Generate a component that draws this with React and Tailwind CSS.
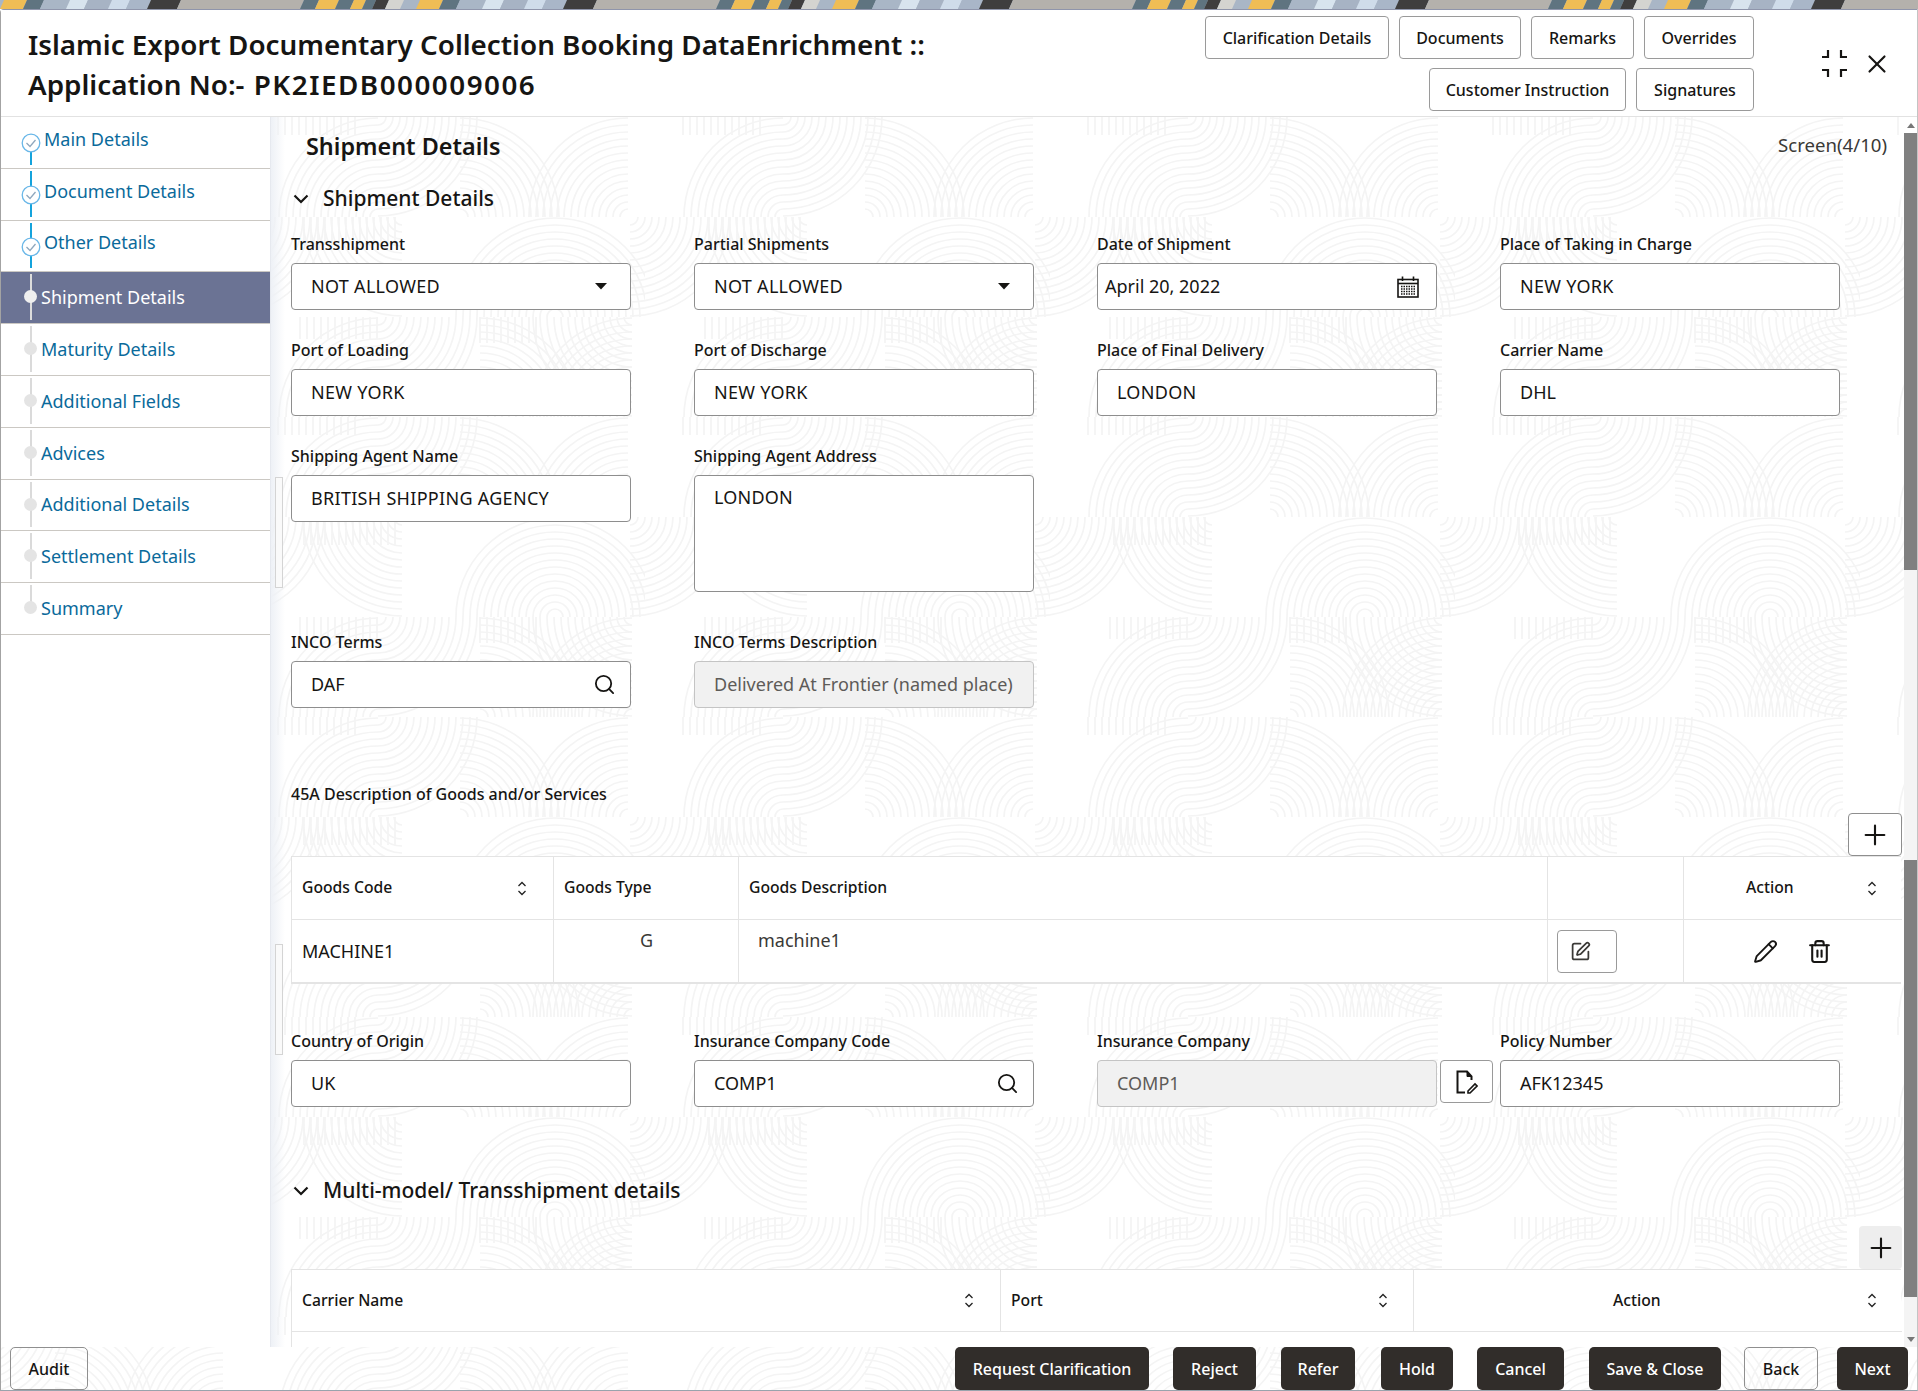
import React from "react";
import { Search, Plus, SquarePen, Pencil, Trash2, X } from "lucide-react";

const QUADS = [
  [138, 100, -1, -1], [138, 0, 1, 1], [220, 100, 1, -1], [388, 100, -1, -1],
  [315, 200, -1, -1], [315, 200, 1, -1], [162, 100, -1, 1], [390, 100, 1, 1], [-15, 100, 1, 1],
  [138, 200, 1, 1], [138, 300, -1, -1], [240, 300, 1, -1], [392, 300, -1, -1], [-13, 300, -1, -1], [392, 200, -1, 1], [-13, 200, -1, 1],
];
const RADII = [8, 15, 22, 29, 36, 43, 50, 57, 64, 71, 78, 85, 92, 99];
const HATCH = [
  [64, 100, 162, 28], [60, 200, 138, 22], [240, 200, 300, 26], [38, 0, 120, 18],
];

function PatternBg() {
  return (
    <svg className="absolute inset-0 w-full h-full" aria-hidden="true">
      <defs>
        <pattern id="fp" width="405" height="300" patternUnits="userSpaceOnUse" patternTransform="translate(240 117)">
          {QUADS.map(([cx, cy, sx, sy], i) =>
            RADII.map((r) => (
              <path
                key={i + "-" + r}
                d={`M${cx + sx * r} ${cy}A${r} ${r} 0 0 ${sx * sy > 0 ? 1 : 0} ${cx} ${cy + sy * r}`}
                fill="none"
                stroke="#f4f4f4"
                strokeWidth="1.7"
              />
            ))
          )}
          {HATCH.map(([a, y, b, h], i) => {
            const xs = [];
            for (let x = a; x < b; x += 7) xs.push(x);
            return xs.map((x) => (
              <path key={"h" + i + "-" + x} d={`M${x} ${y}V${y + h}`} stroke="#f4f4f4" strokeWidth="1.7" />
            ));
          })}
        </pattern>
      </defs>
      <rect width="100%" height="100%" fill="#fff" />
      <rect width="100%" height="100%" fill="url(#fp)" />
    </svg>
  );
}

const BANNER = [
  [0, 23, "#efbd55"], [23, 40, "#5f7480"], [40, 66, "#a9b6c6"], [66, 84, "#d8e4ee"], [84, 108, "#a7b3c4"],
  [108, 126, "#cfdcea"], [126, 147, "#a9b6c8"], [147, 177, "#3f3e3e"], [177, 300, "#b4b1ac"],
  [300, 315, "#5f7480"], [315, 335, "#efbd55"], [335, 350, "#5f7480"], [350, 362, "#efbd55"],
  [362, 372, "#5f7480"], [372, 385, "#3f3e3e"], [385, 400, "#d4d4d0"],
];

function Banner() {
  return (
    <svg className="block w-full h-[9px] shrink-0" aria-hidden="true">
      <defs>
        <pattern id="bn" width="416" height="9" patternUnits="userSpaceOnUse">
          <rect width="416" height="9" fill="#a9b6c6" />
          {BANNER.map(([a, b, c], i) => (
            <polygon key={i} points={`${a + 4},0 ${b + 4},0 ${b},9 ${a},9`} fill={c} />
          ))}
        </pattern>
      </defs>
      <rect width="100%" height="9" fill="url(#bn)" />
    </svg>
  );
}

function Sort({ className = "" }) {
  return (
    <svg width="10" height="15" viewBox="0 0 10 15" fill="none" stroke="#222" strokeWidth="1.3" className={className}>
      <path d="M1.5 5L5 1.5L8.5 5" />
      <path d="M1.5 10L5 13.5L8.5 10" />
    </svg>
  );
}

function Caret() {
  return <svg width="12" height="7" viewBox="0 0 12 7"><path d="M0 0H12L6 6.5Z" fill="#161513" /></svg>;
}

function Chevron() {
  return (
    <svg width="16" height="10" viewBox="0 0 16 10" fill="none" stroke="#161513" strokeWidth="2.2">
      <path d="M1.5 1.5L8 8L14.5 1.5" />
    </svg>
  );
}

function CalendarIcon() {
  return (
    <svg width="22" height="22" viewBox="0 0 22 22" fill="none" stroke="#161513">
      <rect x="1" y="3.5" width="20" height="17.5" strokeWidth="1.6" />
      <path d="M5.5 0.5V5M16.5 0.5V5" strokeWidth="1.6" />
      <path d="M1 7.5H21" strokeWidth="1.6" />
      <path d="M4 10.5H18M4 13H18M4 15.5H18M4 18H18" strokeWidth="1.3" strokeDasharray="1.5 1" />
    </svg>
  );
}

function FileEdit() {
  return (
    <svg width="22" height="24" viewBox="0 0 22 24" fill="none" stroke="#161513" strokeWidth="2">
      <path d="M9 22.5H1.5V1.5H11L15.5 6.5V10" />
      <path d="M11 1.5V6.5H15.5Z" fill="#161513" strokeWidth="1" />
      <path d="M12 21L19 14L21 16L14 23H12Z" strokeWidth="1.6" />
    </svg>
  );
}

function Compress() {
  return (
    <svg width="27" height="27" viewBox="0 0 27 27" fill="none" stroke="#161513" strokeWidth="2.2">
      <path d="M7 0V7H1M20 0V7H26M7 27V20H1M20 27V20H26" />
    </svg>
  );
}

function CheckDot() {
  return (
    <svg width="20" height="20" viewBox="0 0 20 20" fill="#fff" stroke="#69b7e8" strokeWidth="1.3">
      <circle cx="10" cy="10" r="8.8" />
      <path d="M5.5 10L9 13.5L14.5 7" fill="none" stroke="#8fa7bd" />
    </svg>
  );
}

const NAV = [
  { t: "Main Details", done: true, first: true },
  { t: "Document Details", done: true },
  { t: "Other Details", done: true },
  { t: "Shipment Details", active: true },
  { t: "Maturity Details" },
  { t: "Additional Fields" },
  { t: "Advices" },
  { t: "Additional Details" },
  { t: "Settlement Details" },
  { t: "Summary", last: true },
];

function NavItem({ t, done, active, first, last }) {
  return (
    <div
      className={`relative h-[51.8px] flex items-center border-b border-[#cbc8c3] text-[18px] shrink-0 ${
        active ? "bg-[#6b7394] text-white" : "text-[#0a6a9b]"
      } ${done ? "pl-[43px] pb-[6px]" : "pl-[40px]"}`}
    >
      <span
        className={`absolute left-[28.5px] w-[2px] ${first ? "top-[26px]" : "top-[2px]"} ${last ? "bottom-[24px]" : "bottom-[3px]"} ${
          done ? "bg-[#14a3dc]" : active ? "bg-[#dcdcdc]" : "bg-[#dadada]"
        }`}
      />
      {done ? (
        <span className="absolute left-[19.5px] top-[16px]"><CheckDot /></span>
      ) : (
        <span className={`absolute left-[23px] top-[18px] w-[13px] h-[13px] rounded-full ${active ? "bg-[#efefef]" : "bg-[#e4e4e4]"}`} />
      )}
      <span>{t}</span>
    </div>
  );
}

function TopBtn({ w, children }) {
  return (
    <button className={`h-[43px] ${w} shrink-0 rounded-[4px] border border-[#9a9a9a] bg-white text-[16px] font-medium text-[#161513]`}>
      {children}
    </button>
  );
}

function FootBtn({ w, dark, children }) {
  return (
    <button
      className={`h-[43px] ${w} shrink-0 rounded-[5px] text-[16px] font-medium ${
        dark ? "bg-[#312d2a] text-white" : "border border-[#8f8f8f] text-[#161513]"
      }`}
    >
      {children}
    </button>
  );
}

function Field({ label, children, className = "" }) {
  return (
    <div className={className}>
      <div className="h-[22px] mb-[8px] leading-[22px] text-[16px] font-medium text-[#161513] whitespace-nowrap">{label}</div>
      {children}
    </div>
  );
}

function Box({ children, right, readOnly, wide, pl = "pl-[19px]", pr = "pr-[14px]", className = "" }) {
  return (
    <div
      className={`h-[47px] flex items-center justify-between rounded-[4px] border text-[18px] ${pl} ${pr} ${
        readOnly ? "border-[#c4c4c4] bg-[#f1f1f1] text-[#5d5b58]" : "border-[#8e8e8e] bg-white text-[#161513]"
      } ${className}`}
    >
      <span className={`whitespace-nowrap ${wide ? "tracking-[0.3px]" : ""}`}>{children}</span>
      {right}
    </div>
  );
}

function Th({ children }) {
  return <span className="text-[15.7px] font-medium text-[#161513]">{children}</span>;
}

function Section({ children, className = "" }) {
  return (
    <div className={`flex items-center pl-[2px] ${className}`}>
      <Chevron />
      <span className="ml-[14px] text-[21px] font-medium text-[#161513]">{children}</span>
    </div>
  );
}

function Scrollbar() {
  return (
    <div className="w-[13px] shrink-0 flex flex-col items-center bg-[#f4f4f4] overflow-hidden">
      <div className="h-[16px] w-full flex items-center justify-center bg-white">
        <svg width="8" height="5" viewBox="0 0 8 5"><path d="M4 0L8 5H0Z" fill="#777" /></svg>
      </div>
      <div className="h-[437px] w-full bg-[#808080]" />
      <div className="h-[290px] w-full" />
      <div className="h-[437px] w-full bg-[#808080]" />
      <div className="flex-1 w-full" />
      <div className="h-[16px] w-full flex items-center justify-center">
        <svg width="8" height="5" viewBox="0 0 8 5"><path d="M4 5L8 0H0Z" fill="#777" /></svg>
      </div>
    </div>
  );
}

export default function App() {
  return (
    <div className="relative w-[1918px] h-[1391px] overflow-hidden bg-white font-['Noto_Sans',sans-serif]">
      <PatternBg />
      <div className="relative z-10 flex flex-col h-full">
        <Banner />
        <div className="flex-1 min-h-0 flex flex-col border-l border-r border-b border-t border-l-[#a3a3a3] border-r-[#c4c4c4] border-b-[#9aa3ad] border-t-[#8f95ab] rounded-tl-[4px]">
          <header className="h-[107px] shrink-0 flex justify-between bg-white border-b border-[#e2e2e2]">
            <h1 className="pl-[27px] pt-[15px] text-[27.8px] leading-[39.5px] font-semibold text-[#161513]">
              Islamic Export Documentary Collection Booking DataEnrichment ::
              <br />
              Application No:- <span className="ml-[2px] tracking-[1.5px]">PK2IEDB000009006</span>
            </h1>
            <div className="flex pt-[6px]">
              <div className="flex flex-col items-end gap-[9px]">
                <div className="flex gap-[10px]">
                  <TopBtn w="w-[184px]">Clarification Details</TopBtn>
                  <TopBtn w="w-[122px]">Documents</TopBtn>
                  <TopBtn w="w-[103px]">Remarks</TopBtn>
                  <TopBtn w="w-[110px]">Overrides</TopBtn>
                </div>
                <div className="flex gap-[10px]">
                  <TopBtn w="w-[197px]">Customer Instruction</TopBtn>
                  <TopBtn w="w-[118px]">Signatures</TopBtn>
                </div>
              </div>
              <div className="flex items-center gap-[14px] ml-[67px] mr-[25px] mb-[5px]">
                <Compress />
                <X size={30} strokeWidth={1.7} color="#161513" />
              </div>
            </div>
          </header>

          <div className="flex-1 min-h-0 flex">
            <nav className="w-[270px] shrink-0 bg-white flex flex-col border-r border-[#e6e9ef]">
              {NAV.map((n) => <NavItem key={n.t} {...n} />)}
            </nav>
            <main className="relative flex-1 min-w-0 overflow-hidden pl-[20px] pr-[2px]">
              <div className="absolute left-0 top-0 bottom-0 w-[14px] bg-gradient-to-r from-[#eef1f6] to-transparent" />
              <div className="absolute left-[4px] top-[360px] w-[8px] h-[111px] border border-[#d4d4d4] bg-[#fafafa]" />
              <div className="absolute left-[4px] top-[827px] w-[8px] h-[111px] border border-[#d4d4d4] bg-[#fafafa]" />
              <div className="relative flex items-start justify-between pl-[15px] pr-[15px] pt-[13px]">
                <h2 className="text-[23.4px] leading-[32px] font-semibold text-[#161513]">Shipment Details</h2>
                <span className="text-[18.6px] leading-[30px] text-[#3a3936]">Screen(4/10)</span>
              </div>
              <Section className="relative mt-[22px] h-[30px]">Shipment Details</Section>

              <div className="relative grid grid-cols-[340px_340px_340px_340px] gap-x-[63px] gap-y-[29px] mt-[19px]">
                <Field label="Transshipment"><Box wide pr="pr-[15px]" right={<span className="pr-[8px]"><Caret /></span>}>NOT ALLOWED</Box></Field>
                <Field label="Partial Shipments"><Box wide pr="pr-[15px]" right={<span className="pr-[8px]"><Caret /></span>}>NOT ALLOWED</Box></Field>
                <Field label="Date of Shipment"><Box pl="pl-[7px]" pr="pr-[17px]" right={<CalendarIcon />}>April 20, 2022</Box></Field>
                <Field label="Place of Taking in Charge"><Box wide>NEW YORK</Box></Field>
                <Field label="Port of Loading"><Box wide>NEW YORK</Box></Field>
                <Field label="Port of Discharge"><Box wide>NEW YORK</Box></Field>
                <Field label="Place of Final Delivery"><Box wide>LONDON</Box></Field>
                <Field label="Carrier Name"><Box>DHL</Box></Field>
                <Field label="Shipping Agent Name"><Box wide>BRITISH SHIPPING AGENCY</Box></Field>
                <Field label="Shipping Agent Address" className="col-span-3">
                  <div className="w-[340px] h-[117px] rounded-[4px] border border-[#8e8e8e] bg-white pl-[19px] pt-[8px] text-[18px] tracking-[0.2px] text-[#161513]">LONDON</div>
                </Field>
                <Field label="INCO Terms" className="mt-[10px]"><Box right={<Search size={23} strokeWidth={1.9} color="#161513" />}>DAF</Box></Field>
                <Field label="INCO Terms Description" className="mt-[10px] col-span-3"><Box readOnly className="w-[340px]">Delivered At Frontier (named place)</Box></Field>
              </div>

              <div className="relative mt-[75px] h-[22px] leading-[22px] text-[16px] font-medium text-[#161513]">45A Description of Goods and/or Services</div>
              <div className="relative flex justify-end mt-[8px]">
                <button className="w-[54px] h-[43px] flex items-center justify-center rounded-[4px] border border-[#8e8e8e] bg-white">
                  <Plus size={32} strokeWidth={1.6} color="#161513" />
                </button>
              </div>

              <div className="relative grid grid-cols-[262px_185px_809px_136px_218px] grid-rows-[63px_62px] w-[1610px] bg-white border-t border-l border-b-2 border-[#e4e4e4]">
                <div className="flex items-center justify-between pl-[10px] pr-[26px] border-r border-b border-[#e4e4e4]"><Th>Goods Code</Th><Sort /></div>
                <div className="flex items-center pl-[10px] border-r border-b border-[#e4e4e4]"><Th>Goods Type</Th></div>
                <div className="flex items-center pl-[10px] border-r border-b border-[#e4e4e4]"><Th>Goods Description</Th></div>
                <div className="border-r border-b border-[#e4e4e4]" />
                <div className="relative flex items-center pl-[62px] border-b border-[#e4e4e4]"><Th>Action</Th><Sort className="absolute right-[25px]" /></div>
                <div className="flex items-center pl-[10px] text-[18px] text-[#161513] border-r border-[#e4e4e4]">MACHINE1</div>
                <div className="pt-[7px] pl-[86px] text-[18px] text-[#3a3936] border-r border-[#e4e4e4]">G</div>
                <div className="pt-[7px] pl-[19px] text-[18px] text-[#3a3936] border-r border-[#e4e4e4]">machine1</div>
                <div className="flex items-center pl-[9px] border-r border-[#e4e4e4]">
                  <button className="w-[60px] h-[43px] flex items-center pl-[12px] rounded-[4px] border border-[#9a9a9a]">
                    <SquarePen size={21} strokeWidth={2} color="#3a3936" />
                  </button>
                </div>
                <div className="flex items-center pl-[69px] gap-[29px]">
                  <Pencil size={25} strokeWidth={1.8} color="#161513" />
                  <Trash2 size={25} strokeWidth={2} color="#161513" />
                </div>
              </div>

              <div className="relative grid grid-cols-[340px_340px_340px_340px] gap-x-[63px] mt-[46px]">
                <Field label="Country of Origin"><Box>UK</Box></Field>
                <Field label="Insurance Company Code"><Box right={<Search size={23} strokeWidth={1.9} color="#161513" />}>COMP1</Box></Field>
                <Field label="Insurance Company">
                  <div className="flex gap-[3px] w-[396px]">
                    <Box readOnly className="w-[340px]">COMP1</Box>
                    <button className="w-[53px] h-[43px] flex items-center justify-center rounded-[4px] border border-[#9a9a9a] bg-white"><FileEdit /></button>
                  </div>
                </Field>
                <Field label="Policy Number"><Box>AFK12345</Box></Field>
              </div>

              <Section className="relative mt-[69px] h-[30px]">Multi-model/ Transshipment details</Section>
              <div className="relative flex justify-end mt-[20px]">
                <button className="w-[43px] h-[43px] flex items-center justify-center rounded-[4px] bg-[#eeeeee]">
                  <Plus size={32} strokeWidth={1.6} color="#161513" />
                </button>
              </div>
              <div className="relative grid grid-cols-[709px_413px_488px] grid-rows-[62px_40px] w-[1610px] bg-white border-t border-l border-[#e4e4e4]">
                <div className="flex items-center justify-between pl-[10px] pr-[26px] border-r border-b border-[#e4e4e4]"><Th>Carrier Name</Th><Sort /></div>
                <div className="flex items-center justify-between pl-[10px] pr-[25px] border-r border-b border-[#e4e4e4]"><Th>Port</Th><Sort /></div>
                <div className="relative flex items-center pl-[199px] border-b border-[#e4e4e4]"><Th>Action</Th><Sort className="absolute right-[25px]" /></div>
              </div>
            </main>
            <Scrollbar />
          </div>

          <footer className="h-[43px] shrink-0 flex items-center justify-between pl-[9px] pr-[9px]">
            <FootBtn w="w-[78px]">Audit</FootBtn>
            <div className="flex">
              <FootBtn dark w="w-[194px]">Request Clarification</FootBtn>
              <FootBtn dark w="w-[83px] ml-[24px]">Reject</FootBtn>
              <FootBtn dark w="w-[74px] ml-[25px]">Refer</FootBtn>
              <FootBtn dark w="w-[72px] ml-[26px]">Hold</FootBtn>
              <FootBtn dark w="w-[87px] ml-[24px]">Cancel</FootBtn>
              <FootBtn dark w="w-[132px] ml-[25px]">Save &amp; Close</FootBtn>
              <FootBtn w="w-[74px] ml-[23px]">Back</FootBtn>
              <FootBtn dark w="w-[71px] ml-[19px]">Next</FootBtn>
            </div>
          </footer>
        </div>
      </div>
    </div>
  );
}
